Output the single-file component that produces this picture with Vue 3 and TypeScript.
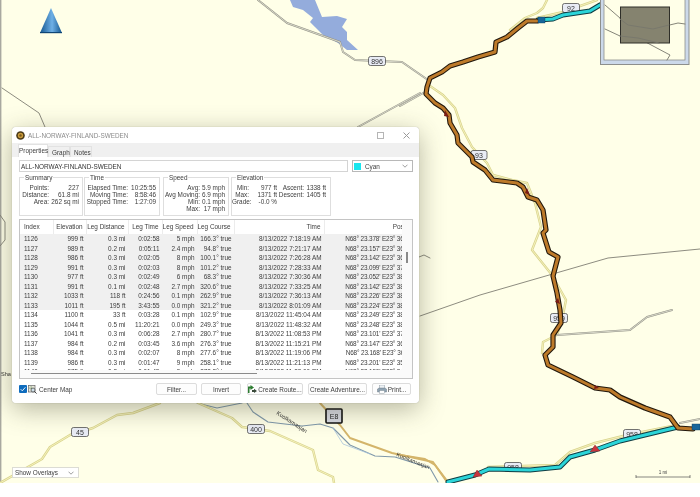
<script setup lang="ts">
interface Row { i: number; el: string; d: string; t: string; s: string; c: string; tm: string; p: string }
const raw = `1126|999 ft|0.3 mi|0:02:58|5 mph|166.3° true|8/13/2022 7:18:19 AM|N68° 23.378' E23° 36.123
1127|989 ft|0.2 mi|0:05:11|2.4 mph|94.8° true|8/13/2022 7:21:17 AM|N68° 23.157' E23° 36.234
1128|986 ft|0.3 mi|0:02:05|8 mph|100.1° true|8/13/2022 7:26:28 AM|N68° 23.142' E23° 36.712
1129|991 ft|0.3 mi|0:02:03|8 mph|101.2° true|8/13/2022 7:28:33 AM|N68° 23.099' E23° 37.412
1130|977 ft|0.3 mi|0:02:49|6 mph|68.3° true|8/13/2022 7:30:36 AM|N68° 23.052' E23° 38.012
1131|991 ft|0.1 mi|0:02:48|2.7 mph|320.6° true|8/13/2022 7:33:25 AM|N68° 23.142' E23° 38.612
1132|1033 ft|118 ft|0:24:56|0.1 mph|262.9° true|8/13/2022 7:36:13 AM|N68° 23.226' E23° 38.412
1133|1011 ft|195 ft|3:43:55|0.0 mph|321.2° true|8/13/2022 8:01:09 AM|N68° 23.224' E23° 38.412
1134|1100 ft|33 ft|0:03:28|0.1 mph|102.9° true|8/13/2022 11:45:04 AM|N68° 23.249' E23° 38.312
1135|1044 ft|0.5 mi|11:20:21|0.0 mph|249.3° true|8/13/2022 11:48:32 AM|N68° 23.248' E23° 38.312
1136|1041 ft|0.3 mi|0:06:28|2.7 mph|280.7° true|8/13/2022 11:08:53 PM|N68° 23.101' E23° 37.312
1137|984 ft|0.2 mi|0:03:45|3.6 mph|276.3° true|8/13/2022 11:15:21 PM|N68° 23.147' E23° 36.612
1138|984 ft|0.3 mi|0:02:07|8 mph|277.6° true|8/13/2022 11:19:06 PM|N68° 23.168' E23° 36.112
1139|986 ft|0.3 mi|0:01:47|9 mph|258.1° true|8/13/2022 11:21:13 PM|N68° 23.201' E23° 35.412
1140|975 ft|0.3 mi|0:01:45|9 mph|272.8° true|8/13/2022 11:23:00 PM|N68° 23.190' E23° 34.812`
const rows: Row[] = raw.split('\n').map((l) => {
  const [i, el, d, t, s, c, tm, p] = l.split('|')
  return { i: Number(i), el, d, t, s, c, tm, p }
})
const headers = ['Index', 'Elevation', 'Leg Distance', 'Leg Time', 'Leg Speed', 'Leg Course', 'Time', 'Position']

const yellow = [
  '547,0 543,8 537,13 525,18 510,30',
  '537,18 563,12 597,0',
  '430,86 443,95 455,108 462,128 472,147 487,163 493,175 512,180 527,183 535,203 541,227 532,250 552,275 566,300 562,320 557,335 543,342 542,353',
  '488,467 555,465 570,452 595,443 627,435 677,425',
  '0,483 42,459 50,447 70,435 93,428 117,415 133,413 160,403',
  '198,403 232,418 242,427 270,431 313,450 318,470 333,477 334,483',
]
const doubles = [
  '258,0 287,23 340,42 343,52 355,60 402,62 428,80',
  '400,106 425,92',
  '358,127 420,93',
  '557,335 630,330 647,317 672,310',
  '680,423 700,419',
]
const thin = ['2,88 39,113 45,127', '420,316 480,295 608,258 700,249', '419,257 424,255 430,258', '0,215 5,222 5,240 0,246']
const water = ['197,403 217,408 242,403', '247,403 253,412 268,422 302,426 320,424 333,428 350,445 375,456 395,457 430,468 438,482']
const route = '537,21 527,21 518,28 507,37 496,42 495,52 478,57 463,62 450,66 442,72 430,78 427,87 426,94 435,103 443,108 449,115 450,123 457,135 458,143 472,157 473,162 485,170 493,180 517,183 523,187 528,197 537,200 543,210 546,230 543,233 549,252 558,257 553,276 557,293 560,310 561,323 553,335 553,347 545,355 548,365 573,377 595,388 610,390 620,397 645,408 670,417 678,428 693,429'
const cyanTop = '538,20 553,19 563,15 590,11 600,5 610,0'
const cyanBottom = '448,482 475,475 489,469 530,470 560,467 570,457 595,450 620,441 678,427'
const badges = [
  { t: '896', x: 377, y: 61, w: 17 },
  { t: '92', x: 571, y: 8, w: 17 },
  { t: '93', x: 479, y: 155, w: 16 },
  { t: '959', x: 559, y: 318, w: 17 },
  { t: '958', x: 632, y: 434, w: 17 },
  { t: '958', x: 513, y: 467, w: 17 },
  { t: '45', x: 80, y: 432, w: 17 },
  { t: '400', x: 256, y: 429, w: 17 },
]
</script>

<template>
  <div class="page">
    <div class="map">
      <svg class="map-svg" width="700" height="483" viewBox="0 0 700 483">
        <defs>
          <linearGradient id="cone" x1="0" x2="1" y1="0" y2="0">
            <stop offset="0" stop-color="#14568f" />
            <stop offset="0.55" stop-color="#6fb0e6" />
            <stop offset="1" stop-color="#13558e" />
          </linearGradient>
        </defs>
        <rect x="0" y="0" width="1.4" height="483" fill="#a9a9a0" />
        <polygon class="lake" points="290,0 293,7 303,10 313,18 310,22 315,27 323,35 338,43 347,50 358,50 347,40 347,32 342,27 347,19 337,16 322,17 315,0" />
        <polygon points="51,8 40,33 62,33" fill="url(#cone)" />
        <rect x="40" y="32" width="22" height="1.2" fill="#0f4576" />

        <polyline class="tan" points="320,403 340,425 350,438 392,453 433,462 447,482" />
        <polyline class="tan" points="400,455 425,459 435,465 448,482" />
        <polyline v-for="p in water" :key="p" class="river" :points="p" />
        <polyline class="river-light" points="333,428 343,444 370,454" />
        <template v-for="p in yellow" :key="p">
          <polyline class="yellow-out" :points="p" />
          <polyline class="yellow-in" :points="p" />
        </template>
        <template v-for="p in doubles" :key="p">
          <polyline class="double-out" :points="p" />
          <polyline class="double-in" :points="p" />
        </template>
        <polyline v-for="p in thin" :key="p" class="thin" :points="p" />

        <g v-for="b in badges" :key="b.t + b.x">
          <rect class="badge" :x="b.x - b.w / 2" :y="b.y - 4.5" :width="b.w" height="9" rx="2" />
          <text class="badge-text" :x="b.x" :y="b.y + 2.5">{{ b.t }}</text>
        </g>

        <polyline class="cyan-out" :points="cyanTop" />
        <polyline class="cyan-in" :points="cyanTop" />
        <polyline class="cyan-out" :points="cyanBottom" />
        <polyline class="cyan-in" :points="cyanBottom" />
        <polyline class="route-out" :points="route" />
        <polyline class="route-in" :points="route" />

        <polygon class="mark" points="477,470 473,477 482,476" />
        <polygon class="mark" points="595,445 590,452 600,451" />
        <polygon class="mark-dark" points="445,110 449,117 444,116" />
        <polygon class="mark-dark" points="527,188 530,195 525,193" />
        <polygon class="mark-dark" points="558,298 560,304 555,302" />
        <polygon class="mark-dark" points="595,385 599,388 594,389" />
        <rect class="flag" x="538" y="17" width="7" height="6" />
        <rect class="flag" x="692" y="424" width="8" height="6" />

        <rect class="e8" x="326" y="409" width="16" height="14" rx="1" />
        <text class="e8-text" x="334" y="419">E8</text>
        <text class="road-label" transform="translate(276 414) rotate(33)">Kuolkamaajan</text>
        <text class="road-label" transform="translate(396 456) rotate(22)">Kuolkamaajan</text>
        <text class="road-label" x="1" y="376">Sha</text>

        <g>
          <rect x="600.5" y="-2" width="88.5" height="66.5" class="inset-outer" />
          <rect x="604" y="-2" width="81" height="62" class="inset-inner" />
          <polyline class="inset-line" points="605,5 628,25 653,29 678,23 685,24" />
          <polyline class="inset-line" points="605,29 620,36 638,38 670,55 667,60" />
          <rect x="620.5" y="7" width="49" height="36" class="inset-view" />
          <polyline class="inset-line" points="620,19 628,25 653,29 669,25" />
          <polyline class="inset-line" points="620,36 638,38 659,43" />
        </g>

        <line class="scale" x1="636" y1="477" x2="690" y2="477" />
        <line class="scale" x1="636" y1="475" x2="636" y2="478" />
        <line class="scale" x1="690" y1="475" x2="690" y2="478" />
        <text class="scale-text" x="663" y="474">1 mi</text>
      </svg>
    </div>

    <div class="overlay-select">
      <span>Show Overlays</span>
      <svg class="chev" width="6" height="4" viewBox="0 0 6 4"><path d="M.5.7 3 3.2 5.5.7" /></svg>
    </div>

    <section class="window">
      <header class="titlebar">
        <svg class="app-icon" width="9" height="9" viewBox="0 0 9 9">
          <circle cx="4.5" cy="4.5" r="4.3" fill="#4b3a18" />
          <circle cx="4.5" cy="4.5" r="2.7" fill="#c89a3a" />
          <circle cx="4.5" cy="4.5" r="1.2" fill="#7c5a1c" />
        </svg>
        <span class="title">ALL-NORWAY-FINLAND-SWEDEN</span>
        <span class="controls">
          <svg width="7" height="7" viewBox="0 0 7 7"><rect x=".5" y=".5" width="6" height="6" fill="none" stroke="#b5b5b5" /></svg>
          <svg width="7" height="7" viewBox="0 0 7 7"><path d="M.5.5l6 6m0-6-6 6" stroke="#9a9a9a" /></svg>
        </span>
      </header>

      <nav class="tabs">
        <span class="tab active">Properties</span>
        <span class="tab">Graph</span>
        <span class="tab">Notes</span>
      </nav>

      <div class="panel">
        <div class="name-row">
          <div class="name-input">ALL-NORWAY-FINLAND-SWEDEN</div>
          <div class="color-select">
            <i class="swatch"></i>
            <span>Cyan</span>
            <svg class="chev" width="6" height="4" viewBox="0 0 6 4"><path d="M.5.7 3 3.2 5.5.7" /></svg>
          </div>
        </div>

        <div class="groups">
          <div class="group g-summary">
            <span class="legend">Summary</span>
            <span>Points:</span><b>227</b>
            <span>Distance:</span><b>61.8 mi</b>
            <span>Area:</span><b>262 sq mi</b>
          </div>
          <div class="group g-time">
            <span class="legend">Time</span>
            <span>Elapsed Time:</span><b>10:25:55</b>
            <span>Moving Time:</span><b>8:58:46</b>
            <span>Stopped Time:</span><b>1:27:09</b>
          </div>
          <div class="group g-speed">
            <span class="legend">Speed</span>
            <span>Avg:</span><b>5.9 mph</b>
            <span>Avg Moving:</span><b>6.9 mph</b>
            <span>Min:</span><b>0.1 mph</b>
            <span>Max:</span><b>17 mph</b>
          </div>
          <div class="group g-elev">
            <span class="legend">Elevation</span>
            <span>Min:</span><b>977 ft</b><span>Ascent:</span><b>1338 ft</b>
            <span>Max:</span><b>1371 ft</b><span>Descent:</span><b>1405 ft</b>
            <span>Grade:</span><b>-0.0 %</b>
          </div>
        </div>

        <div class="table">
          <div class="viewport">
            <div class="grid head">
              <span v-for="h in headers" :key="h">{{ h }}</span>
            </div>
            <div class="rows">
              <div v-for="r in rows" :key="r.i" class="grid row" :class="{ selected: r.i <= 1133 }">
                <span>{{ r.i }}</span><span>{{ r.el }}</span><span>{{ r.d }}</span><span>{{ r.t }}</span>
                <span>{{ r.s }}</span><span>{{ r.c }}</span><span>{{ r.tm }}</span><span class="pos">{{ r.p }}</span>
              </div>
            </div>
          </div>
          <div class="vbar"><i></i></div>
          <div class="hbar"><i></i></div>
        </div>

        <footer class="actions">
          <label class="center">
            <svg class="check" width="8" height="8" viewBox="0 0 8 8">
              <rect width="8" height="8" rx="1" fill="#0f6cbd" />
              <path d="M1.7 4.2 3.3 5.8 6.4 2.3" fill="none" stroke="#fff" stroke-width=".9" />
            </svg>
            <svg class="center-ico" width="9" height="9" viewBox="0 0 9 9">
              <rect x=".5" y=".5" width="6.5" height="6.5" fill="#e6e6da" stroke="#666" stroke-width=".7" />
              <path d="M1 3l5 1M3 1l1 5" stroke="#6a8f5a" stroke-width=".6" />
              <circle cx="5" cy="5" r="2" fill="#cfe0ea" stroke="#444" stroke-width=".7" />
              <path d="M6.4 6.4 8.6 8.6" stroke="#333" stroke-width=".9" />
            </svg>
            <span>Center Map</span>
          </label>
          <button class="btn b-filter">Filter...</button>
          <button class="btn b-invert">Invert</button>
          <button class="btn b-route">
            <svg width="9" height="8" viewBox="0 0 9 8">
              <path d="M0 1.5h2.5V0L6 2.5 2.5 5V3.5H1.5V8H0Z" fill="#2e7d32" />
              <path d="M4 5h2V3.7L9 6 6 8V7H4Z" fill="#3a4a3a" />
            </svg>
            Create Route...
          </button>
          <button class="btn b-adv">Create Adventure...</button>
          <button class="btn b-print">
            <svg width="10" height="9" viewBox="0 0 10 9">
              <rect x="2.5" y="0" width="5" height="3.5" fill="#eef2f5" stroke="#8b98a3" stroke-width=".5" />
              <path d="M.5 4 2 3h6l1.5 1v3H.5Z" fill="#8fa3b3" stroke="#5d6a75" stroke-width=".4" />
              <rect x="2.5" y="5.6" width="5" height="3" fill="#fff" stroke="#7b8790" stroke-width=".4" />
            </svg>
            Print...
          </button>
        </footer>
      </div>
    </section>
  </div>
</template>

<style>
html, body { margin: 0; background: #fff; }
</style>

<style scoped>
.page {
  position: relative;
  width: 700px;
  height: 497px;
  overflow: hidden;
  background: #fff;
  font-family: "Liberation Sans", Arial, sans-serif;
  font-size: 6.4px;
  color: #3d3d3d;
  filter: blur(0.28px);
}
.map { height: 483px; background: #ffffe8; }
.map-svg { display: block; }
polyline { fill: none; stroke-linejoin: round; stroke-linecap: round; }
.lake { fill: #94acdc; }
.tan { stroke: #d4b56a; stroke-width: 2; }
.river { stroke: #7f98aa; stroke-width: 1.1; }
.river-light { stroke: #a8c4dc; stroke-width: .8; }
.yellow-out { stroke: #d9d48e; stroke-width: 2.4; }
.yellow-in { stroke: #f7f4c0; stroke-width: .9; }
.double-out { stroke: #949488; stroke-width: 1.9; }
.double-in { stroke: #f4f4e4; stroke-width: .7; }
.thin { stroke: #807f74; stroke-width: .9; }
.route-out { stroke: #20170c; stroke-width: 5.2; }
.route-in { stroke: #bd7a2a; stroke-width: 3; }
.cyan-out { stroke: #103c42; stroke-width: 5; }
.cyan-in { stroke: #2bd5d9; stroke-width: 3; }
.mark { fill: #c8343c; stroke: #7c1c20; stroke-width: .4; }
.mark-dark { fill: #7a1c14; }
.flag { fill: #17669a; stroke: #123c5a; stroke-width: .4; }
.badge { fill: #e9ecf5; stroke: #3a3a3a; stroke-width: .7; }
.badge-text { font-size: 7px; fill: #333; text-anchor: middle; }
.e8 { fill: #d6d8e0; stroke: #111; stroke-width: 1.6; }
.e8-text { font-size: 7px; fill: #222; text-anchor: middle; }
.road-label { font-size: 5.6px; fill: #333; }
.inset-outer { fill: #ccd9ea; stroke: #8d8f8c; stroke-width: 1; }
.inset-inner { fill: #ffffe8; stroke: #8d8f8c; stroke-width: .8; }
.inset-view { fill: #85836f; stroke: #2e2e28; stroke-width: 1; }
.inset-line { stroke: #77776c; stroke-width: .9; }
.scale { stroke: #555; stroke-width: .7; }
.scale-text { font-size: 4.6px; fill: #444; text-anchor: middle; }

.overlay-select {
  position: absolute;
  left: 12px;
  top: 467px;
  width: 67px;
  height: 11px;
  box-sizing: border-box;
  padding: 0 4px 0 2px;
  display: flex;
  align-items: center;
  justify-content: space-between;
  background: #fff;
  border: 1px solid #dcdcd4;
}
.chev path { fill: none; stroke: #777; stroke-width: .7; }

.window {
  position: absolute;
  left: 12px;
  top: 127px;
  width: 407px;
  height: 276px;
  display: flex;
  flex-direction: column;
  background: #f0f0f0;
  border-radius: 4px;
  box-shadow: 0 6px 26px rgba(60, 60, 40, .38), 0 0 1px rgba(0, 0, 0, .4);
  overflow: hidden;
}
.titlebar {
  height: 16px;
  flex: none;
  display: flex;
  align-items: center;
  padding-left: 4px;
  background: #fff;
}
.title { margin-left: 3px; color: #8c8c8c; }
.controls {
  margin-left: auto;
  display: flex;
  gap: 19px;
  padding-right: 9px;
}
.tabs {
  height: 14px;
  flex: none;
  display: flex;
  align-items: flex-end;
  padding-left: 6px;
  background: #f0f0f0;
}
.tab {
  height: 11px;
  padding: 2px 3px 0;
  box-sizing: border-box;
  width: 22px;
  text-align: center;
  white-space: nowrap;
  background: #f0f0f0;
  border: 1px solid #e2e2e2;
  border-bottom: 0;
}
.tab.active {
  height: 13px;
  width: 30px;
  background: #fff;
  padding: 2px 0 0;
}
.panel {
  flex: 1;
  background: #fff;
  padding: 3px 6px 0 7px;
  display: flex;
  flex-direction: column;
}
.name-row { display: flex; gap: 4px; height: 12px; }
.name-input {
  width: 329px;
  box-sizing: border-box;
  border: 1px solid #d4d4d4;
  padding: 1px 1px;
  line-height: 9px;
  color: #333;
}
.color-select {
  width: 61px;
  box-sizing: border-box;
  border: 1px solid #b8b8b8;
  display: flex;
  align-items: center;
  padding: 0 4px 0 1px;
}
.swatch { width: 7px; height: 7px; background: #19e6ee; margin-right: 4px; }
.color-select .chev { margin-left: auto; }

.groups { display: flex; margin-top: 5px; height: 39px; flex: none; }
.group {
  position: relative;
  box-sizing: border-box;
  border: 1px solid #dedede;
  display: grid;
  grid-auto-rows: 7.1px;
  align-content: start;
  padding-top: 6px;
  line-height: 7px;
}
.group > span:not(.legend), .group b { text-align: right; font-weight: 400; white-space: nowrap; }
.legend {
  position: absolute;
  left: 4px;
  top: -4px;
  background: #fff;
  padding: 0 1px;
}
.g-summary { width: 64px; grid-template-columns: 29px 30px; }
.g-time { width: 76px; margin-left: 1px; grid-template-columns: 43px 28px; }
.g-speed { width: 66px; margin-left: 3px; grid-template-columns: 36px 25px; }
.g-elev { width: 100px; margin-left: 2px; grid-template-columns: 17px 28px 27px 22px; }

.table {
  position: relative;
  margin-top: 3px;
  width: 394px;
  height: 160px;
  box-sizing: border-box;
  border: 1px solid #c4c4c4;
  flex: none;
}
.viewport { width: 383px; height: 150.5px; overflow: hidden; }
.grid {
  display: grid;
  grid-template-columns: 33.5px 33px 42px 34px 35px 37px 90px 94px;
  width: 398px;
}
.grid span { text-align: right; padding-right: 3px; white-space: nowrap; }
.grid span:first-child { text-align: left; padding-left: 4px; padding-right: 0; }
.grid .pos { letter-spacing: -0.15px; }
.head { height: 14px; line-height: 14px; }
.head span { border-right: 1px solid #ececec; box-sizing: border-box; }
.head span:last-child { border: 0; padding-right: 3px; }
.rows { height: 136.5px; overflow: hidden; }
.row { height: 9.5px; line-height: 9.5px; }
.row.selected { background: #f0f0f0; }
.vbar {
  position: absolute;
  right: 0;
  top: 0;
  bottom: 0;
  width: 10px;
  background: #fafafa;
}
.vbar i {
  position: absolute;
  left: 4px;
  top: 32px;
  width: 1.5px;
  height: 11px;
  background: #8a8a8a;
}
.hbar {
  position: absolute;
  left: 0;
  right: 10px;
  bottom: 0;
  height: 8.5px;
  background: #fafafa;
}
.hbar i {
  position: absolute;
  left: 11px;
  top: 3px;
  width: 226px;
  height: 1.2px;
  background: #8a8a8a;
}
.actions { display: flex; align-items: center; height: 12px; margin-top: 4px; }
.center { display: flex; align-items: center; width: 137px; }
.center-ico { margin: 0 2px 0 1px; }
.btn {
  height: 12px;
  box-sizing: border-box;
  border: 1px solid #dcdcdc;
  border-radius: 2px;
  background: #fdfdfd;
  color: #3d3d3d;
  font: inherit;
  padding: 0;
  display: flex;
  align-items: center;
  justify-content: center;
  gap: 1px;
  white-space: nowrap;
}
.b-filter { width: 41px; }
.b-invert { width: 40px; margin-left: 4px; }
.b-route { width: 56px; margin-left: 6px; }
.b-adv { width: 59px; margin-left: 5px; }
.b-print { width: 39px; margin-left: 5px; }
</style>
